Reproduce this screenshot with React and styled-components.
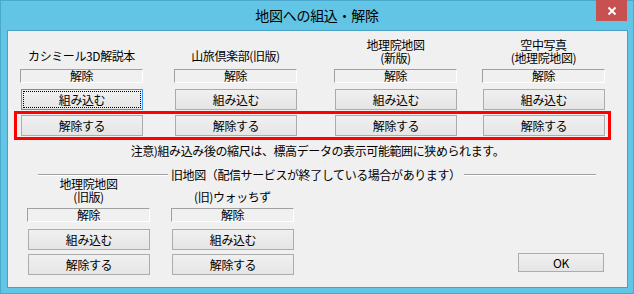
import React from 'react'
import styled, { createGlobalStyle } from 'styled-components'

const Global = createGlobalStyle`
  html, body {
    margin: 0;
    padding: 0;
    background: #62c5e6;
  }
  * { box-sizing: border-box; }
`

const FONT = `"Noto Sans CJK JP", "Liberation Sans", sans-serif`

const topCols = '154px 160px 148px 123px'
const bottomCols = '144px 123px 1fr'

function App() {
  const top = [
    { label: ['カシミール3D解説本'], focus: true },
    { label: ['山旅倶楽部(旧版)'] },
    { label: ['地理院地図', '(新版)'] },
    { label: ['空中写真', '(地理院地図)'] },
  ]
  const old = [
    { label: ['地理院地図', '(旧版)'] },
    { label: ['(旧)ウォッちず'] },
  ]

  return (
    <>
      <Global />
      <Window>
        <TitleBar>
          <span />
          <Title>地図への組込・解除</Title>
          <CloseButton>
            <svg width="10" height="10" viewBox="0 0 10 10">
              <path d="M1.5 1.5 L8.5 8.5 M8.5 1.5 L1.5 8.5" stroke="#fff" strokeWidth="2" />
            </svg>
          </CloseButton>
        </TitleBar>

        <Client>
          <LabelRow $cols={topCols} $ml={12}>
            {top.map((c, i) => (
              <Label key={i} $single={c.label.length === 1}>
                {c.label.map((l, j) => <div key={j}>{l}</div>)}
              </Label>
            ))}
          </LabelRow>
          <Row $cols={topCols} $ml={12} $mt={5}>
            {top.map((c, i) => <Status key={i}>解除</Status>)}
          </Row>
          <Row $cols={topCols} $ml={12} $mt={6}>
            {top.map((c, i) => <Button key={i} $focus={c.focus}>組み込む</Button>)}
          </Row>
          <Highlight>
            <Row $cols={topCols}>
              {top.map((c, i) => <Button key={i}>解除する</Button>)}
            </Row>
          </Highlight>

          <Note>注意)組み込み後の縮尺は、標高データの表示可能範囲に狭められます。</Note>

          <GroupHeader>
            <GroupLine $w={130} />
            <GroupText>旧地図（配信サービスが終了している場合があります）</GroupText>
            <GroupLine />
          </GroupHeader>

          <LabelRow $cols={bottomCols} $ml={19} $mt={-5}>
            {old.map((c, i) => (
              <Label key={i} $single={c.label.length === 1} $bottom>
                {c.label.map((l, j) => <div key={j}>{l}</div>)}
              </Label>
            ))}
          </LabelRow>
          <Row $cols={bottomCols} $ml={19} $mt={5}>
            {old.map((c, i) => <Status key={i}>解除</Status>)}
          </Row>
          <Row $cols={bottomCols} $ml={19} $mt={7}>
            {old.map((c, i) => <Button key={i}>組み込む</Button>)}
          </Row>
          <Row $cols={bottomCols} $ml={19} $mt={4}>
            {old.map((c, i) => <Button key={i}>解除する</Button>)}
            <OkButton>OK</OkButton>
          </Row>
        </Client>
      </Window>
    </>
  )
}

export default App

const Window = styled.div`
    width: 634px;
    height: 294px;
    background: #62c5e6;
    border: 1px solid #4aa8cc;
    display: flex;
    flex-direction: column;
    font-family: ${FONT};
    color: #000;
`

const TitleBar = styled.div`
    height: 29px;
    display: grid;
    grid-template-columns: 1fr auto 1fr;
    align-items: start;
`

const Title = styled.div`
    font-size: 14px;
    line-height: 16px;
    margin-top: 6px;
    letter-spacing: -0.3px;
`

const CloseButton = styled.div`
    justify-self: end;
    margin-top: -1px;
    margin-right: 6px;
    width: 31px;
    height: 21px;
    background: #c75050;
    display: flex;
    align-items: center;
    justify-content: center;
`

const Client = styled.div`
    flex: 1;
    margin: 0 5px 5px 6px;
    border: 1px solid #4a9fc2;
    background: #f0f0f0;
    padding-top: 7px;
    font-size: 12px;
    letter-spacing: -0.4px;
    display: flex;
    flex-direction: column;
`

const Row = styled.div`
    display: grid;
    grid-template-columns: ${p => p.$cols};
    margin-left: ${p => p.$ml || 0}px;
    margin-top: ${p => p.$mt || 0}px;
    align-items: start;
`

const LabelRow = styled(Row)`
    height: 26px;
    align-items: end;
`

const Label = styled.div`
    width: 123px;
    text-align: center;
    line-height: 13px;
    padding-bottom: ${p => (p.$single ? (p.$bottom ? 0 : 2) : 0)}px;
`

const Status = styled.div`
    width: 123px;
    height: 14px;
    border-top: 1px solid #a0a0a0;
    border-left: 1px solid #a0a0a0;
    border-bottom: 1px solid #fff;
    border-right: 1px solid #fff;
    text-align: center;
    line-height: 12px;
`

const Button = styled.div`
    width: 122px;
    height: 21px;
    margin-left: 1px;
    border: 1px solid ${p => (p.$focus ? '#3399ff' : '#acacac')};
    background: linear-gradient(#f0f0f0, #e5e5e5);
    display: flex;
    align-items: center;
    justify-content: center;
    outline: ${p => (p.$focus ? '1px dotted #000' : 'none')};
    outline-offset: -3px;
`

const OkButton = styled(Button)`
    width: 86px;
    height: 19px;
    justify-self: end;
    margin-right: 23px;
    margin-top: -1px;
`

const Highlight = styled.div`
    margin: 1px 0 0 6px;
    width: 597px;
    border: 3px solid #ff0000;
    padding: 1px 2px 1px 3px;
`

const Note = styled.div`
    margin-top: 4px;
    text-align: center;
    line-height: 14px;
`

const GroupHeader = styled.div`
    margin: 10px 0 0 30px;
    width: 558px;
    height: 14px;
    display: flex;
    align-items: center;
    gap: 3px;
`

const GroupLine = styled.div`
    height: 2px;
    border-top: 1px solid #a0a0a0;
    border-bottom: 1px solid #fff;
    ${p => (p.$w ? `width: ${p.$w}px; flex-shrink: 0;` : 'flex: 1;')}
`

const GroupText = styled.div`
    line-height: 14px;
    white-space: nowrap;
`
